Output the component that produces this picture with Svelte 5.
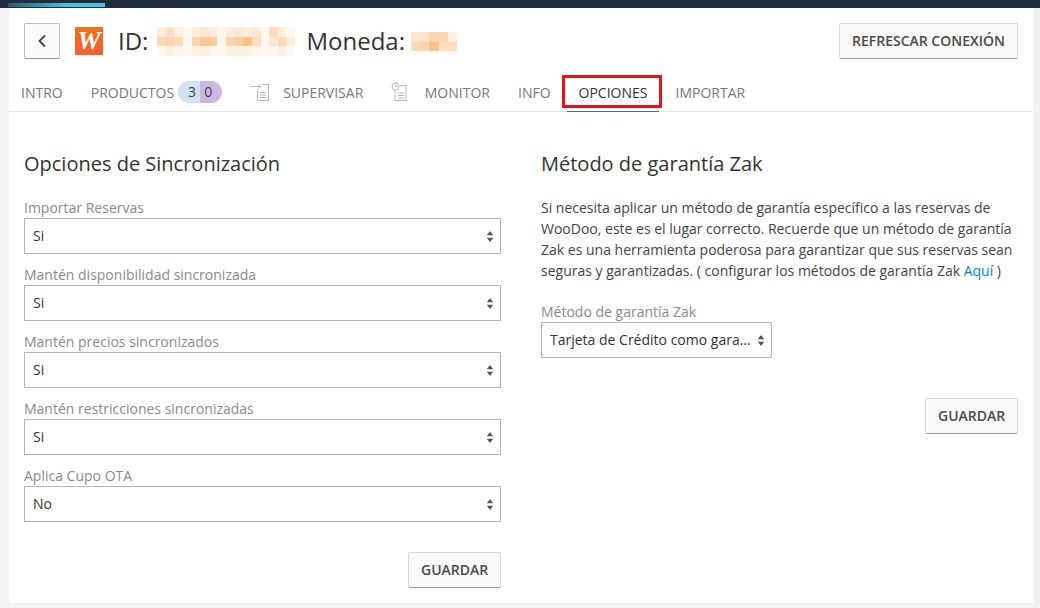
<script>
	const tabs = [
		{ label: 'Intro' },
		{ label: 'Productos', badge: true },
		{ label: 'Supervisar', icon: 'arrow' },
		{ label: 'Monitor', icon: 'clock' },
		{ label: 'Info' },
		{ label: 'Opciones', active: true },
		{ label: 'Importar' }
	];

	const fields = [
		{ label: 'Importar Reservas', value: 'Si' },
		{ label: 'Mantén disponibilidad sincronizada', value: 'Si' },
		{ label: 'Mantén precios sincronizados', value: 'Si' },
		{ label: 'Mantén restricciones sincronizadas', value: 'Si' },
		{ label: 'Aplica Cupo OTA', value: 'No' }
	];

	// pixelated blur over the hidden values, one row of opacities per mosaic row
	const idMosaic = [
		[0.25, 0.4, 0.2, 0.12, 0.25, 0.3, 0.25, 0.12, 0.25, 0.3, 0.25, 0.3, 0.12, 0.45, 0.25, 0.08],
		[0.5, 0.55, 0.45, 0.1, 0.55, 0.75, 0.65, 0.1, 0.55, 0.65, 0.8, 0.45, 0.1, 0.3, 0.5, 0.25],
		[0.1, 0.2, 0.15, 0.08, 0.18, 0.2, 0.12, 0.08, 0.18, 0.2, 0.18, 0.12, 0.08, 0.12, 0.18, 0.08]
	];
	const coinMosaic = [
		[0.3, 0.35, 0.55, 0.55, 0.2],
		[0.5, 0.55, 0.8, 0.45, 0.45]
	];
</script>

<div class="topbar"><div class="progress"></div></div>

<div class="panel">
	<header>
		<button class="btn back" aria-label="Volver">
			<svg width="10" height="14" viewBox="0 0 10 14"><path d="M8 1.5 2.5 7 8 12.5" fill="none" stroke="#444" stroke-width="1.8" /></svg>
		</button>
		<div class="logo">W</div>
		<h1>ID:</h1>
		<svg class="mosaic" width="138" height="29" viewBox="0 0 16 3" preserveAspectRatio="none" shape-rendering="crispEdges">
			{#each idMosaic as row, y}
				{#each row as o, x}
					<rect {x} {y} width="1" height="1" fill="#ffb26b" opacity={o} />
				{/each}
			{/each}
		</svg>
		<h1 class="coin">Moneda:</h1>
		<svg class="mosaic small" width="46" height="19" viewBox="0 0 5 2" preserveAspectRatio="none" shape-rendering="crispEdges">
			{#each coinMosaic as row, y}
				{#each row as o, x}
					<rect {x} {y} width="1" height="1" fill="#ffb26b" opacity={o} />
				{/each}
			{/each}
		</svg>
		<button class="btn refresh">Refrescar conexión</button>
	</header>

	<nav>
		{#each tabs as tab}
			<div class="tab" class:active={tab.active}>
				{#if tab.icon === 'arrow'}
					<svg class="icon" width="20" height="20" viewBox="0 0 20 20" fill="none" stroke="#b5b5b5">
						<path d="M0 4.5h10M8 2.5l2.5 2-2.5 2" />
						<path d="M7.5 7.5v11h11V2.5h-6" />
						<path d="M10 10.5h6M10 13h6M10 15.5h6" />
					</svg>
				{:else if tab.icon === 'clock'}
					<svg class="icon clock" width="16" height="20" viewBox="0 0 16 20" fill="none" stroke="#b5b5b5">
						<circle cx="4.5" cy="4.5" r="3.5" />
						<path d="M4.5 2.5v2h2" />
						<path d="M9 3.5h6v15H4v-10" />
						<path d="M7 11h6M7 13.5h6M7 16h6" />
					</svg>
				{/if}
				<span>{tab.label}</span>
				{#if tab.badge}
					<span class="badge"><b class="blue">3</b><b class="violet">0</b></span>
				{/if}
				{#if tab.active}
					<div class="highlight"></div>
				{/if}
			</div>
		{/each}
	</nav>

	<main>
		<section>
			<h2>Opciones de Sincronización</h2>
			{#each fields as field}
				<label>
					{field.label}
					<select>
						<option>{field.value}</option>
					</select>
				</label>
			{/each}
			<div class="actions first">
				<button class="btn">Guardar</button>
			</div>
		</section>

		<section>
			<h2>Método de garantía Zak</h2>
			<p>
				Si necesita aplicar un método de garantía específico a las reservas de WooDoo, este es el
				lugar correcto. Recuerde que un método de garantía Zak es una herramienta poderosa para
				garantizar que sus reservas sean seguras y garantizadas. ( configurar los métodos de
				garantía Zak <a href="#aqui">Aquí</a> )
			</p>
			<label class="narrow">
				Método de garantía Zak
				<select>
					<option>Tarjeta de Crédito como garantía</option>
				</select>
			</label>
			<div class="actions second">
				<button class="btn">Guardar</button>
			</div>
		</section>
	</main>
</div>

<style>
	:global(body) {
		background: #f2f2f2;
		font-family: 'Open Sans', sans-serif;
		color: #333;
	}

	.topbar {
		height: 8px;
		background: #1f2d3d;
		padding-top: 3px;
		box-sizing: border-box;
	}

	.progress {
		height: 4px;
		width: 97px;
		margin-left: 8px;
		background: linear-gradient(to right, #2c5a6b, #45c3d6 60%);
	}

	.panel {
		width: 1024px;
		margin-left: 9px;
		background: #fff;
		box-sizing: border-box;
		padding-top: 15px;
		padding-bottom: 15px;
	}

	header {
		display: flex;
		align-items: center;
		height: 36px;
		padding: 0 15px;
	}

	.btn {
		height: 36px;
		padding: 0 12px 2px;
		box-sizing: border-box;
		background: #fafafa;
		border: 1px solid #d8d8d8;
		border-bottom-color: #9a9a9a;
		border-radius: 2px;
		font: 600 14px 'Open Sans', sans-serif;
		color: #4a4a4a;
		text-transform: uppercase;
	}

	.back {
		width: 36px;
		padding: 0;
		display: flex;
		align-items: center;
		justify-content: center;
		border-color: #bbb;
		border-bottom-color: #999;
	}

	.logo {
		width: 28px;
		height: 28px;
		margin-left: 15px;
		border-radius: 1px;
		background: linear-gradient(to bottom, #f57112, #f2603c);
		color: #fff;
		font: italic bold 26px/28px 'Liberation Serif', serif;
		text-align: center;
		overflow: hidden;
	}

	h1 {
		margin: 0 0 0 15px;
		font-size: 24px;
		font-weight: 400;
		line-height: 36px;
		color: #333;
	}

	.mosaic {
		margin-left: 9px;
	}

	.mosaic.small {
		margin-left: 6px;
	}

	.coin {
		margin-left: 11px;
	}

	.refresh {
		margin-left: auto;
	}

	nav {
		display: flex;
		gap: 4px;
		height: 36px;
		margin-top: 16px;
		border-bottom: 1px solid #e6e6e6;
	}

	.tab {
		position: relative;
		display: flex;
		align-items: center;
		height: 36px;
		box-sizing: border-box;
		padding: 0 12px 2px;
		font-size: 14px;
		text-transform: uppercase;
		color: #777;
	}

	.tab.active {
		color: #333;
		border-bottom: 1px solid #2a7bb0;
		height: 37px;
	}

	.highlight {
		position: absolute;
		left: -5px;
		right: -3px;
		top: 0;
		height: 33px;
		box-sizing: border-box;
		border: 3px solid #e8101c;
	}

	.icon {
		margin-right: 13px;
	}

	.icon.clock {
		margin-right: 17.5px;
	}

	.badge {
		display: flex;
		height: 22px;
		margin-left: 4px;
		border-radius: 11px;
		overflow: hidden;
		line-height: 22px;
	}

	.badge b {
		width: 22px;
		font-weight: 400;
		color: #444;
	}

	.blue {
		background: #cfe3f5;
		text-align: right;
		padding-right: 4px;
		box-sizing: border-box;
	}

	.violet {
		background: #c9b8e2;
		padding-left: 4px;
		box-sizing: border-box;
	}

	main {
		display: grid;
		grid-template-columns: 477px 477px;
		gap: 40px;
		padding: 38px 15px 0;
	}

	h2 {
		margin: 0 0 21px;
		font-size: 20px;
		font-weight: 400;
		line-height: 28px;
		color: #333;
	}

	label {
		display: block;
		margin-bottom: 12px;
		font-size: 14px;
		line-height: 17px;
		color: #8a8a8a;
	}

	label.narrow {
		width: 231px;
		margin-top: 22px;
		margin-bottom: 0;
	}

	select {
		display: block;
		width: 100%;
		height: 36px;
		margin-top: 2px;
		box-sizing: border-box;
		padding: 0 16px 2px 8px;
		font: 14px 'Open Sans', sans-serif;
		color: #333;
		background: #fff url("data:image/svg+xml,%3Csvg xmlns='http://www.w3.org/2000/svg' width='8' height='11'%3E%3Cpath fill='%23555' d='M4 0l3.2 4.2H.8zM4 11L.8 6.8h6.4z'/%3E%3C/svg%3E") no-repeat right 6px center;
		border: 1px solid #b5b5b5;
		border-radius: 0;
		appearance: none;
		text-overflow: ellipsis;
		white-space: nowrap;
		overflow: hidden;
	}

	p {
		margin: -2px 0 0;
		font-size: 14px;
		line-height: 21px;
		color: #444;
	}

	a {
		color: #0a7cc4;
		text-decoration: none;
	}

	.actions {
		display: flex;
		justify-content: flex-end;
	}

	.actions .btn {
		width: 93px;
	}

	.actions.first {
		margin-top: 30px;
	}

	.actions.second {
		margin-top: 40px;
	}
</style>
